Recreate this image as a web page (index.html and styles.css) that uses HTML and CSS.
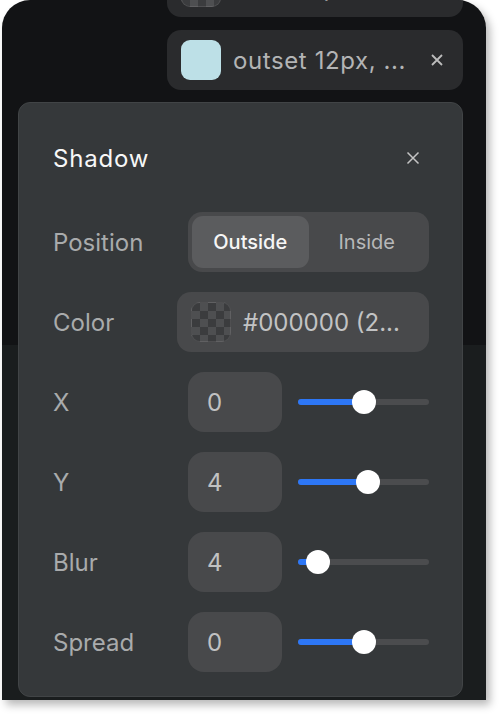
FILE: index.html
```html
<!DOCTYPE html>
<html>
<head>
<meta charset="utf-8">
<link rel="stylesheet" href="styles.css">
</head>
<body>
<div class="frame">
  <div class="chips">
    <div class="chip">
      <span class="swatch checker"></span>
      <span class="chip-text">inset 12px, ...</span>
      <svg class="chip-x" viewBox="0 0 16 16"><path d="M3 3L13 13M13 3L3 13"/></svg>
    </div>
    <div class="chip">
      <span class="swatch light"></span>
      <span class="chip-text">outset 12px, ...</span>
      <svg class="chip-x" viewBox="0 0 16 16"><path d="M3 3L13 13M13 3L3 13"/></svg>
    </div>
  </div>

  <div class="panel">
    <div class="panel-head">
      <span class="title">Shadow</span>
      <svg class="head-x" viewBox="0 0 16 16"><path d="M2.5 2.5L13.5 13.5M13.5 2.5L2.5 13.5"/></svg>
    </div>

    <div class="row">
      <span class="label">Position</span>
      <div class="seg">
        <span class="seg-item active">Outside</span>
        <span class="seg-item">Inside</span>
      </div>
    </div>

    <div class="row">
      <span class="label">Color</span>
      <div class="color-field">
        <span class="swatch checker small"></span>
        <span class="color-text">#000000 (2...</span>
      </div>
    </div>

    <div class="row">
      <span class="label">X</span>
      <div class="num-group">
        <div class="num">0</div>
        <div class="slider"><div class="fill" style="width:66px"></div><div class="thumb" style="left:66px"></div></div>
      </div>
    </div>

    <div class="row">
      <span class="label">Y</span>
      <div class="num-group">
        <div class="num">4</div>
        <div class="slider"><div class="fill" style="width:70px"></div><div class="thumb" style="left:70px"></div></div>
      </div>
    </div>

    <div class="row">
      <span class="label">Blur</span>
      <div class="num-group">
        <div class="num">4</div>
        <div class="slider"><div class="fill" style="width:20px"></div><div class="thumb" style="left:20px"></div></div>
      </div>
    </div>

    <div class="row">
      <span class="label">Spread</span>
      <div class="num-group">
        <div class="num">0</div>
        <div class="slider"><div class="fill" style="width:66px"></div><div class="thumb" style="left:66px"></div></div>
      </div>
    </div>
  </div>
</div>
</body>
</html>
```

FILE: styles.css
```css
* { box-sizing: border-box; }
html, body { margin: 0; padding: 0; background: #ffffff; }
body {
  font-family: Inter, "Noto Sans", sans-serif;
  width: 500px;
  height: 716px;
  overflow: hidden;
}
.frame {
  margin-left: 2px;
  width: 484px;
  height: 700px;
  border-radius: 28px 28px 0 0;
  background: linear-gradient(#121315 0, #121315 345px, #1a1d1e 345px);
  box-shadow: 4px 5px 8px rgba(0, 0, 0, 0.28);
  overflow: hidden;
  padding: 0 23px 0 16px;
}
.chips {
  display: flex;
  flex-direction: column;
  align-items: flex-end;
  gap: 13px;
  margin-top: -43px;
}
.chip {
  width: 296px;
  height: 60px;
  background: #2a2b2d;
  border-radius: 14px;
  display: flex;
  align-items: center;
  padding: 0 18px 0 14px;
}
.swatch {
  width: 40px;
  height: 40px;
  border-radius: 9px;
  flex: none;
}
.swatch.light { background: #bde0e7; }
.swatch.checker {
  background-color: #3b3c3e;
  background-image:
    linear-gradient(45deg, #4e4f51 25%, transparent 25%, transparent 75%, #4e4f51 75%),
    linear-gradient(45deg, #4e4f51 25%, transparent 25%, transparent 75%, #4e4f51 75%);
  background-size: 16px 16px;
  background-position: 0 0, 8px 8px;
  border: 1px solid rgba(255, 255, 255, 0.1);
}
.chip-text {
  margin-left: 12px;
  flex: 1;
  font-size: 24px;
  color: #b3b4b5;
  letter-spacing: 0.6px;
  white-space: nowrap;
}
.chip-x {
  width: 16px;
  height: 16px;
  fill: none;
  stroke: #bcbcbc;
  stroke-width: 1.8;
}
.panel {
  margin-top: 12px;
  width: 445px;
  height: 595px;
  background: #35383a;
  border: 1px solid #414446;
  border-radius: 12px;
  padding: 25px 33px 0 34px;
  display: flex;
  flex-direction: column;
  gap: 20px;
}
.panel-head {
  height: 60px;
  display: flex;
  align-items: center;
  justify-content: space-between;
  padding-right: 8px;
  margin-bottom: 4px;
}
.title {
  font-size: 24px;
  color: #f7f7f7;
  font-weight: 400;
  letter-spacing: 0.8px;
}
.head-x {
  width: 16px;
  height: 16px;
  fill: none;
  stroke: #c4c4c4;
  stroke-width: 1.5;
}
.row {
  height: 60px;
  display: flex;
  align-items: center;
  justify-content: space-between;
}
.label {
  font-size: 24px;
  color: #a9abac;
}
.seg {
  width: 241px;
  height: 60px;
  background: #48494b;
  border-radius: 14px;
  padding: 4px;
  display: flex;
}
.seg-item {
  flex: 1;
  display: flex;
  align-items: center;
  justify-content: center;
  font-size: 20px;
  color: #b7b8b9;
  border-radius: 11px;
}
.seg-item.active {
  background: #5b5c5e;
  color: #f6f6f6;
  font-weight: 500;
}
.color-field {
  width: 252px;
  height: 60px;
  background: #48494b;
  border-radius: 14px;
  padding-left: 14px;
  display: flex;
  align-items: center;
}
.color-text {
  margin-left: 12px;
  font-size: 24px;
  color: #c2c3c4;
  white-space: nowrap;
}
.num-group {
  display: flex;
  align-items: center;
  gap: 16px;
}
.num {
  width: 94px;
  height: 60px;
  background: #48494b;
  border-radius: 16px;
  padding-left: 19px;
  display: flex;
  align-items: center;
  font-size: 24px;
  color: #c0c1c2;
}
.slider {
  position: relative;
  width: 131px;
  height: 6px;
  border-radius: 3px;
  background: #4b4c4e;
}
.fill {
  height: 6px;
  border-radius: 3px;
  background: #2d77f6;
}
.thumb {
  position: absolute;
  top: 50%;
  width: 24px;
  height: 24px;
  margin: -12px 0 0 -12px;
  border-radius: 50%;
  background: #ffffff;
}
```
